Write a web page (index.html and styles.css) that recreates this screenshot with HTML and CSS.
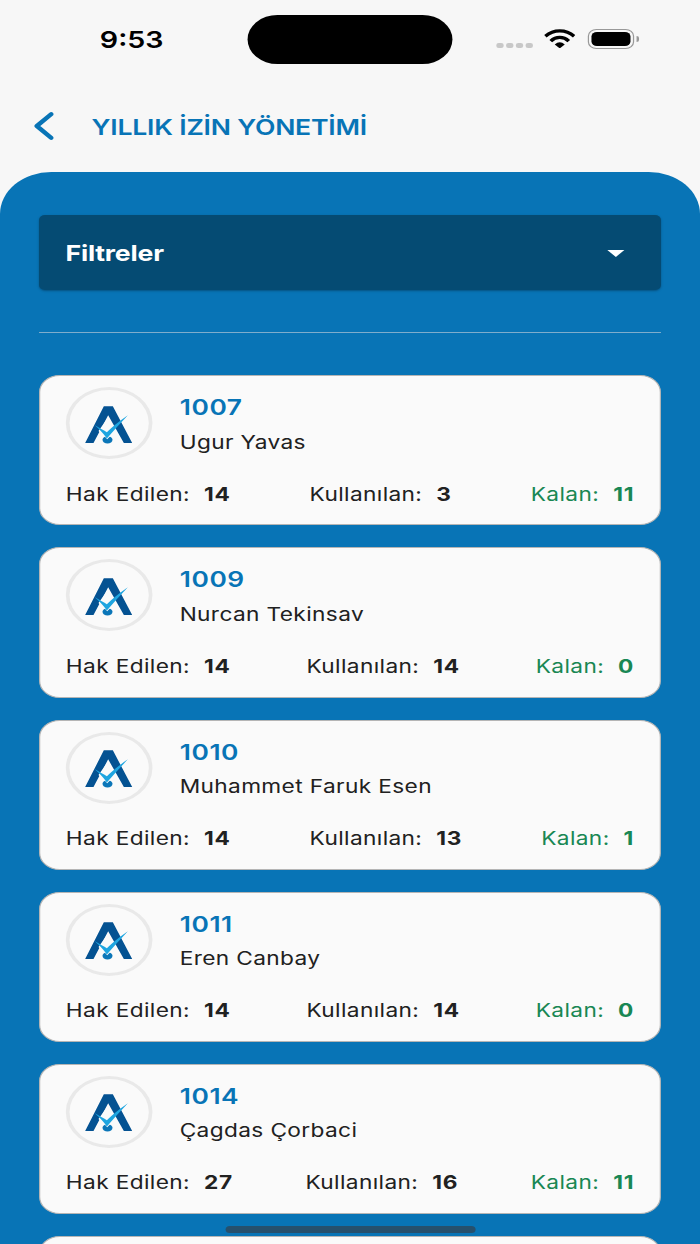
FILE: index.html
```html
<!DOCTYPE html>
<html lang="tr">
<head>
<meta charset="utf-8">
<title>Yıllık İzin Yönetimi</title>
<link rel="stylesheet" href="styles.css">
</head>
<body>
<svg class="defs" aria-hidden="true">
  <symbol id="logo" viewBox="70 72 148 118" preserveAspectRatio="none">
    <path fill="#045292" d="M129 76H156L214 186H189L142 103L98 186H73Z"/>
    <path fill="#fafafa" d="M113 150L140 112L166 148L144 176H136Z"/>
    <ellipse fill="#0b76b8" cx="140" cy="176.500" rx="15" ry="11"/>
    <path fill="#fafafa" d="M120 154L140 160L160 154L139 174.500Z"/>
    <path fill="#1ea5e0" d="M101 132Q126 146 138 154Q162 130 201 103Q169 137 138 172.500Q126 154 101 132Z"/>
  </symbol>
</svg>
<div class="screen">
  <div class="status">
    <span class="time">9:53</span>
    <span class="island"></span>
    <div class="indicators">
      <span class="dots"><i></i><i></i><i></i><i></i></span>
      <svg class="wifi" viewBox="0 0 31 20" preserveAspectRatio="none">
        <path d="M0.300 6.200Q6.700 0.300 15.500 0.300T30.700 6.200L28.400 8.600Q22.500 3.600 15.500 3.600T2.600 8.600Z"/>
        <path d="M5.400 11.200Q9.700 6.900 15.500 6.900T25.600 11.200L23 13.500Q19.700 10.300 15.500 10.300T8 13.500Z"/>
        <path d="M10.600 15.800Q15.500 11.400 20.400 15.800L15.500 19.900Z"/>
      </svg>
      <span class="battery"><i></i></span><span class="cap"></span>
    </div>
  </div>
  <header class="header">
    <svg class="back" viewBox="0 0 16 28"><path d="M14 2.200L2.200 14L14 25.800"/></svg>
    <h1 class="title">YILLIK İZİN YÖNETİMİ</h1>
  </header>
  <main class="sheet">
    <div class="filter"><span>Filtreler</span><i class="caret"></i></div>
    <hr class="rule">
    <div class="list">
      <article class="card">
        <div class="person"><span class="avatar"><svg class="logo"><use href="#logo"/></svg></span><div><div class="num">1007</div><div class="name">Ugur Yavas</div></div></div>
        <div class="stats"><span>Hak Edilen: <b>14</b></span><span>Kullanılan: <b>3</b></span><span class="left">Kalan: <b>11</b></span></div>
      </article>
      <article class="card">
        <div class="person"><span class="avatar"><svg class="logo"><use href="#logo"/></svg></span><div><div class="num">1009</div><div class="name">Nurcan Tekinsav</div></div></div>
        <div class="stats"><span>Hak Edilen: <b>14</b></span><span>Kullanılan: <b>14</b></span><span class="left">Kalan: <b>0</b></span></div>
      </article>
      <article class="card">
        <div class="person"><span class="avatar"><svg class="logo"><use href="#logo"/></svg></span><div><div class="num">1010</div><div class="name">Muhammet Faruk Esen</div></div></div>
        <div class="stats"><span>Hak Edilen: <b>14</b></span><span>Kullanılan: <b>13</b></span><span class="left">Kalan: <b>1</b></span></div>
      </article>
      <article class="card">
        <div class="person"><span class="avatar"><svg class="logo"><use href="#logo"/></svg></span><div><div class="num">1011</div><div class="name">Eren Canbay</div></div></div>
        <div class="stats"><span>Hak Edilen: <b>14</b></span><span>Kullanılan: <b>14</b></span><span class="left">Kalan: <b>0</b></span></div>
      </article>
      <article class="card">
        <div class="person"><span class="avatar"><svg class="logo"><use href="#logo"/></svg></span><div><div class="num">1014</div><div class="name">Çagdas Çorbaci</div></div></div>
        <div class="stats"><span>Hak Edilen: <b>27</b></span><span>Kullanılan: <b>16</b></span><span class="left">Kalan: <b>11</b></span></div>
      </article>
      <article class="card"></article>
    </div>
  </main>
  <span class="home"></span>
</div>
</body>
</html>
```
FILE: styles.css
```css
* { box-sizing: border-box; }
html, body { margin: 0; height: 1244px; overflow: hidden; background: #f7f7f7; }
body { font-family: Inter, "Liberation Sans", sans-serif; }
.defs { display: none; }

/* The phone canvas is 574 wide, widened to fill the 700px window. */
.screen {
  position: relative;
  width: 574px;
  height: 1244px;
  overflow: hidden;
  display: flex;
  flex-direction: column;
  transform: scaleX(1.21951);
  transform-origin: 0 0;
}

.status {
  height: 79px;
  flex: none;
  display: grid;
  grid-template-columns: 203px 168px 1fr;
  align-items: center;
}
.time { padding-left: 13px; text-align: center; font-size: 23.500px; font-weight: 600; color: #000; }
.island { height: 49px; border-radius: 25px; background: #000; }
.indicators { display: flex; align-items: center; padding-left: 36px; }
.dots { display: flex; gap: 2.500px; margin-top: 12px; }
.dots i { width: 5.500px; height: 5.500px; border-radius: 2px; background: #c8c8c8; }
.wifi { width: 26px; height: 19.500px; margin-left: 9.800px; margin-top: -2px; }
.battery { width: 38px; height: 20px; margin-left: 10px; margin-top: -2px; padding: 2px; border: 1.500px solid #999; border-radius: 7px; }
.battery i { display: block; height: 100%; border-radius: 4.500px; background: #000; }
.cap { width: 2.200px; height: 6px; margin-left: 1.300px; margin-top: -2px; border-radius: 0 3px 3px 0; background: #999; }

.header { height: 93px; flex: none; display: flex; align-items: center; padding-left: 27.500px; }
.back { width: 16px; height: 28px; fill: none; stroke: #0874b6; stroke-width: 4; stroke-linecap: round; stroke-linejoin: round; }
.title { margin: 2px 0 0 31.500px; font-size: 21.800px; line-height: 28px; font-weight: 600; letter-spacing: -.16px; color: #0874b6; white-space: nowrap; }

.sheet { flex: 1; min-height: 0; padding: 43px 32px 0; border-radius: 42px 42px 0 0; background: #0874b6; }
.filter {
  height: 75px;
  display: flex;
  align-items: center;
  justify-content: space-between;
  padding: 1px 30.500px 0 21.700px;
  border-radius: 5px;
  background: #054b73;
  box-shadow: 0 1px 2px rgba(0, 0, 0, .3);
  color: #fff;
  font-size: 21.800px;
  font-weight: 700;
  letter-spacing: -.15px;
}
.caret { border: 7px solid transparent; border-top-color: #fff; border-bottom: 0; }
.rule { height: 1px; margin: 42px 0 42.400px; border: 0; background: #7fadcc; }

.list { display: flex; flex-direction: column; gap: 22px; }
.card {
  height: 150.100px;
  flex: none;
  padding: 11px 21px 0;
  border: 1px solid #b5b5b5;
  border-radius: 17px;
  background: #fafafa;
  color: #212121;
}
.person { display: flex; gap: 22px; }
.avatar { width: 71.500px; height: 72px; flex: none; margin-left: -.2px; padding: 14.200px 12px; border: 3px solid #e9e9e9; border-radius: 50%; }
.logo { display: block; width: 40.500px; height: 39.300px; }
.num { margin-top: 5px; line-height: 30px; font-size: 21.600px; font-weight: 600; letter-spacing: .5px; color: #0874b6; }
.name { margin-top: 6.500px; line-height: 26px; font-size: 18.600px; letter-spacing: .3px; }
.stats { display: flex; justify-content: space-between; margin-top: 20.600px; line-height: 28px; font-size: 18.600px; letter-spacing: .3px; white-space: nowrap; }
.stats b { margin-left: 6px; font-weight: 700; letter-spacing: .6px; }
.left { color: #198754; }

.home { position: absolute; left: 184.500px; top: 1226px; width: 205px; height: 7px; border-radius: 4px; background: #26506d; }
```
